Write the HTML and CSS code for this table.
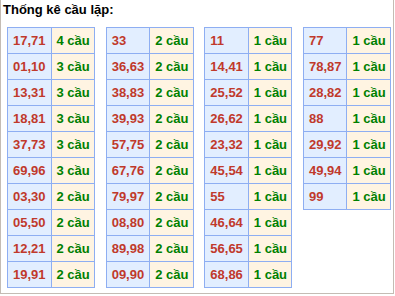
FILE: index.html
```html
<!DOCTYPE html>
<html lang="vi">
<head>
<meta charset="utf-8">
<title>Thống kê cầu lặp</title>
<link rel="stylesheet" href="styles.css">
</head>
<body>
<div class="frame">
  <div class="title">Thống kê cầu lặp:</div>
  <div class="tables">
    <table class="stat">
      <tr><td class="num">17,71</td><td class="cnt">4 cầu</td></tr>
      <tr><td class="num">01,10</td><td class="cnt">3 cầu</td></tr>
      <tr><td class="num">13,31</td><td class="cnt">3 cầu</td></tr>
      <tr><td class="num">18,81</td><td class="cnt">3 cầu</td></tr>
      <tr><td class="num">37,73</td><td class="cnt">3 cầu</td></tr>
      <tr><td class="num">69,96</td><td class="cnt">3 cầu</td></tr>
      <tr><td class="num">03,30</td><td class="cnt">2 cầu</td></tr>
      <tr><td class="num">05,50</td><td class="cnt">2 cầu</td></tr>
      <tr><td class="num">12,21</td><td class="cnt">2 cầu</td></tr>
      <tr><td class="num">19,91</td><td class="cnt">2 cầu</td></tr>
    </table>
    <table class="stat">
      <tr><td class="num">33</td><td class="cnt">2 cầu</td></tr>
      <tr><td class="num">36,63</td><td class="cnt">2 cầu</td></tr>
      <tr><td class="num">38,83</td><td class="cnt">2 cầu</td></tr>
      <tr><td class="num">39,93</td><td class="cnt">2 cầu</td></tr>
      <tr><td class="num">57,75</td><td class="cnt">2 cầu</td></tr>
      <tr><td class="num">67,76</td><td class="cnt">2 cầu</td></tr>
      <tr><td class="num">79,97</td><td class="cnt">2 cầu</td></tr>
      <tr><td class="num">08,80</td><td class="cnt">2 cầu</td></tr>
      <tr><td class="num">89,98</td><td class="cnt">2 cầu</td></tr>
      <tr><td class="num">09,90</td><td class="cnt">2 cầu</td></tr>
    </table>
    <table class="stat">
      <tr><td class="num">11</td><td class="cnt">1 cầu</td></tr>
      <tr><td class="num">14,41</td><td class="cnt">1 cầu</td></tr>
      <tr><td class="num">25,52</td><td class="cnt">1 cầu</td></tr>
      <tr><td class="num">26,62</td><td class="cnt">1 cầu</td></tr>
      <tr><td class="num">23,32</td><td class="cnt">1 cầu</td></tr>
      <tr><td class="num">45,54</td><td class="cnt">1 cầu</td></tr>
      <tr><td class="num">55</td><td class="cnt">1 cầu</td></tr>
      <tr><td class="num">46,64</td><td class="cnt">1 cầu</td></tr>
      <tr><td class="num">56,65</td><td class="cnt">1 cầu</td></tr>
      <tr><td class="num">68,86</td><td class="cnt">1 cầu</td></tr>
    </table>
    <table class="stat">
      <tr><td class="num">77</td><td class="cnt">1 cầu</td></tr>
      <tr><td class="num">78,87</td><td class="cnt">1 cầu</td></tr>
      <tr><td class="num">28,82</td><td class="cnt">1 cầu</td></tr>
      <tr><td class="num">88</td><td class="cnt">1 cầu</td></tr>
      <tr><td class="num">29,92</td><td class="cnt">1 cầu</td></tr>
      <tr><td class="num">49,94</td><td class="cnt">1 cầu</td></tr>
      <tr><td class="num">99</td><td class="cnt">1 cầu</td></tr>
    </table>
  </div>
</div>
</body>
</html>
```

FILE: styles.css
```css
html, body {
  margin: 0;
  padding: 0;
  background: #ffffff;
}

body {
  font-family: "Liberation Sans", Arial, sans-serif;
  font-size: 13px;
}

.frame {
  width: 392px;
  height: 293px;
  border-left: 1px solid #c4bcb4;
  border-right: 1px solid #c4bcb4;
  border-bottom: 1px solid #c4bcb4;
  box-sizing: content-box;
}

.title {
  font-weight: bold;
  color: #000000;
  line-height: 15px;
  padding: 2px 0 0 2px;
  margin-bottom: 10px;
}

.tables {
  display: flex;
  justify-content: space-between;
  align-items: flex-start;
  padding: 0 2px 0 6px;
}

.stat {
  border-collapse: collapse;
  width: 88px;
  table-layout: fixed;
}

.stat td {
  border: 1px solid #8eaef2;
  line-height: 25px;
  height: 25px;
  padding: 0 0 0 5px;
  font-weight: bold;
  white-space: nowrap;
  width: 50%;
}

.stat .num {
  background: #e2eeff;
  color: #c0392b;
}

.stat .cnt {
  background: #fff4e2;
  color: #008000;
}
```
